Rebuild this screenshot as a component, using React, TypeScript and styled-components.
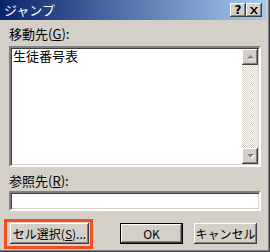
import React from "react";
import styled, { createGlobalStyle } from "styled-components";

const Global = createGlobalStyle`
  html, body { margin: 0; padding: 0; background: #d4d0c8; }
  body { font-family: "Noto Sans CJK JP", "Noto Sans", sans-serif; }
`;

const Window = styled.div`
  position: relative;
  width: 270px;
  height: 252px;
  box-sizing: border-box;
  background: #d4d0c8;
  padding: 0 4px 4px 0;
  box-shadow: inset -1px -1px 0 #404040, inset -2px -2px 0 #808080;
  display: flex;
  flex-direction: column;
  font-size: 13px;
  color: #000;
`;

const TitleBar = styled.div`
  height: 20px;
  flex: none;
  display: flex;
  align-items: center;
  padding-left: 4px;
  background: linear-gradient(to right, #0a246a, #a6caf0);
  color: #fff;
  font-size: 13px;
  line-height: 20px;
`;

const TitleText = styled.span`
  flex: 1;
`;

const CaptionButton = styled.div<{ $gap?: number }>`
  width: 16px;
  height: 14px;
  box-sizing: border-box;
  margin-right: ${(p) => p.$gap ?? 0}px;
  background: #d4d0c8;
  box-shadow: inset -1px -1px 0 #404040, inset 1px 1px 0 #fff, inset -2px -2px 0 #808080;
  display: flex;
  align-items: center;
  justify-content: center;
`;

const Content = styled.div`
  flex: 1;
  display: flex;
  flex-direction: column;
  padding: 7px 5px 0 9px;
`;

const Label = styled.div<{ $mt?: number }>`
  height: 14px;
  line-height: 14px;
  margin-top: ${(p) => p.$mt ?? 0}px;
`;

const U = styled.span`
  text-decoration: underline;
`;

const ListBox = styled.div`
  margin-top: 5px;
  height: 121px;
  box-sizing: border-box;
  background: #fff;
  border: 2px solid;
  border-color: #808080 #fff #fff #808080;
  box-shadow: inset 1px 1px 0 #404040, inset -1px -1px 0 #d4d0c8;
  padding: 1px;
  display: flex;
`;

const ListItems = styled.div`
  flex: 1;
  padding: 0 1px;
  line-height: 14px;
  font-size: 13px;
`;

const ScrollBar = styled.div`
  width: 16px;
  display: flex;
  flex-direction: column;
  justify-content: space-between;
  background: repeating-conic-gradient(#d4d0c8 0 25%, #fff 0 50%) 0 0 / 2px 2px;
`;

const ScrollButton = styled.div`
  width: 16px;
  height: 16px;
  box-sizing: border-box;
  background: #d4d0c8;
  box-shadow: inset -1px -1px 0 #404040, inset 1px 1px 0 #fff, inset -2px -2px 0 #808080;
  display: flex;
  align-items: center;
  justify-content: center;
`;

const TextInput = styled.div`
  margin-top: 3px;
  height: 20px;
  box-sizing: border-box;
  background: #fff;
  border: 2px solid;
  border-color: #808080 #fff #fff #808080;
  box-shadow: inset 1px 1px 0 #404040, inset -1px -1px 0 #d4d0c8;
`;

const ButtonRow = styled.div`
  position: relative;
  margin-top: 12px;
  display: flex;
  padding: 0 4px 0 1px;
`;

const Button = styled.div<{ $w: number; $default?: boolean; $ml?: string }>`
  width: ${(p) => p.$w}px;
  height: 21px;
  box-sizing: border-box;
  margin-left: ${(p) => p.$ml ?? "0"};
  display: flex;
  align-items: center;
  justify-content: center;
  font-size: 12px;
  line-height: 14px;
  white-space: nowrap;
  background: #d4d0c8;
  border: ${(p) => (p.$default ? "1px solid #000" : "none")};
  box-shadow: inset -1px -1px 0 #404040, inset 1px 1px 0 #fff, inset -2px -2px 0 #808080;
`;

const Highlight = styled.div`
  position: absolute;
  left: -5px;
  top: -4px;
  width: 89px;
  height: 30px;
  box-sizing: border-box;
  border: 3px solid #f04e23;
  pointer-events: none;
`;

const Arrow = ({ up }: { up: boolean }) => (
  <svg width="9" height="6" viewBox="0 0 9 6">
    {up ? (
      <>
        <polygon points="4.5,1 8,4.5 1,4.5" transform="translate(1,1)" fill="#fff" />
        <polygon points="4.5,1 8,4.5 1,4.5" fill="#808080" />
      </>
    ) : (
      <>
        <polygon points="1,1 8,1 4.5,4.5" transform="translate(1,1)" fill="#fff" />
        <polygon points="1,1 8,1 4.5,4.5" fill="#808080" />
      </>
    )}
  </svg>
);

const HelpGlyph = styled.span`
  font-family: "DejaVu Sans", sans-serif;
  font-weight: bold;
  font-size: 12px;
  line-height: 12px;
  color: #000;
`;

export default function App() {
  return (
    <>
      <Global />
      <Window>
        <TitleBar>
          <TitleText>ジャンプ</TitleText>
          <CaptionButton>
            <HelpGlyph>?</HelpGlyph>
          </CaptionButton>
          <CaptionButton $gap={4}>
            <svg width="8" height="7" viewBox="0 0 8 7">
              <path d="M0 0h2l2 2.5L6 0h2L5 3.5 8 7H6L4 4.5 2 7H0l3-3.5z" fill="#000" />
            </svg>
          </CaptionButton>
        </TitleBar>
        <Content>
          <Label>
            移動先(<U>G</U>):
          </Label>
          <ListBox>
            <ListItems>生徒番号表</ListItems>
            <ScrollBar>
              <ScrollButton>
                <Arrow up />
              </ScrollButton>
              <ScrollButton>
                <Arrow up={false} />
              </ScrollButton>
            </ScrollBar>
          </ListBox>
          <Label $mt={7}>
            参照先(<U>R</U>):
          </Label>
          <TextInput />
          <ButtonRow>
            <Button $w={79}>
              セル選択(<U>S</U>)...
            </Button>
            <Button $w={63} $default $ml="auto">
              OK
            </Button>
            <Button $w={63} $ml="11px">
              キャンセル
            </Button>
            <Highlight />
          </ButtonRow>
        </Content>
      </Window>
    </>
  );
}
